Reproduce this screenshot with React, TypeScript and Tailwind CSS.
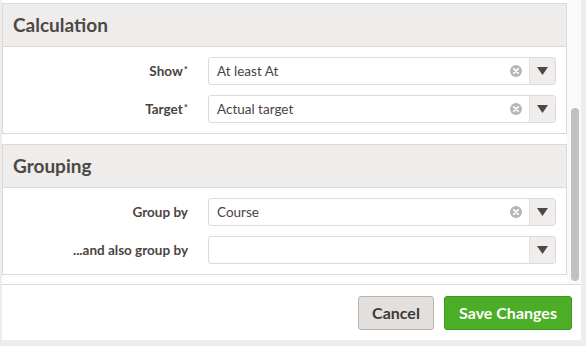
import React from "react";

interface FieldProps {
  label: string;
  value?: string;
  required?: boolean;
  clearable?: boolean;
}

const sections: { title: string; fields: FieldProps[] }[] = [
  {
    title: "Calculation",
    fields: [
      { label: "Show", value: "At least At", required: true, clearable: true },
      { label: "Target", value: "Actual target", required: true, clearable: true },
    ],
  },
  {
    title: "Grouping",
    fields: [
      { label: "Group by", value: "Course", clearable: true },
      { label: "...and also group by", value: "" },
    ],
  },
];

const ClearIcon = () => (
  <svg width="12" height="12" viewBox="0 0 12 12">
    <circle cx="6" cy="6" r="6" fill="#b9b5b2" />
    <path d="M3.8 3.8 L8.2 8.2 M8.2 3.8 L3.8 8.2" stroke="#fff" strokeWidth="1.8" strokeLinecap="round" />
  </svg>
);

const SelectField = ({ label, value, required, clearable }: FieldProps) => {
  return <div className="flex items-center">
      <div className="w-[185px] text-right text-[13.5px] font-bold text-[#4a4441]">
        {label}{required && <span className="relative -top-[3px] ml-[1px] text-[10px]">*</span>}
      </div>
      <div className="ml-[20px] flex h-[28px] w-[348px] items-center rounded-[3px] border border-[#dddad7] bg-white">
        <div className="flex-1 pt-[1px] pl-[8px] text-[13.5px] leading-none text-[#4a4441]">{value}</div>
        {clearable && <div className="mr-[7px] flex items-center"><ClearIcon /></div>}
        <div className="flex h-full w-[26px] items-center justify-center rounded-r-[3px] border-l border-[#e4e1de] bg-[#f0eeec]">
          <svg width="11" height="8" viewBox="0 0 11 8"><path d="M0 0 H11 L5.5 8 Z" fill="#4e4845" /></svg>
        </div>
      </div>
    </div>;
};

const App = () => {
  return <div className="h-[346px] w-[586px] bg-[#eeedeb] pl-[2px] pr-[5px] pb-[6px]" style={{ fontFamily: 'Lato, sans-serif' }}>
      <div className="flex h-full flex-col bg-white">
        <div className="flex h-[285px] border-b border-[#dcdad8]">
          <div className="flex-1 overflow-hidden pt-[3px]">
            {sections.map((section, i) => <div key={i} className="mb-[10px] border border-[#dcdad8]">
                <div className="flex h-[43px] items-center border-b border-[#dcdad8] bg-[#eeedeb] pl-[10px] text-[19px] font-bold text-[#4d4845]">
                  {section.title}
                </div>
                <div className="flex flex-col gap-[10px] py-[10px]">
                  {section.fields.map((f, j) => <SelectField key={j} {...f} />)}
                </div>
              </div>)}
          </div>
          <div className="w-[14px] bg-[#fafafa] pl-[4px] pt-[108px]">
            <div className="h-[173px] w-[8px] rounded-full bg-[#c1c1c1]"></div>
          </div>
        </div>
        <div className="flex flex-1 items-center justify-end gap-[10px] pr-[9px]">
          <button className="h-[34px] w-[76px] rounded-[3px] border border-[#b9b4b1] bg-[#e3dfdd] text-[16px] font-bold text-[#3f3a37]">Cancel</button>
          <button className="h-[34px] w-[128px] rounded-[3px] border border-[#3d9a1c] bg-[#4cae26] text-[16px] font-bold text-white">Save Changes</button>
        </div>
      </div>
    </div>;
};

export default App;
